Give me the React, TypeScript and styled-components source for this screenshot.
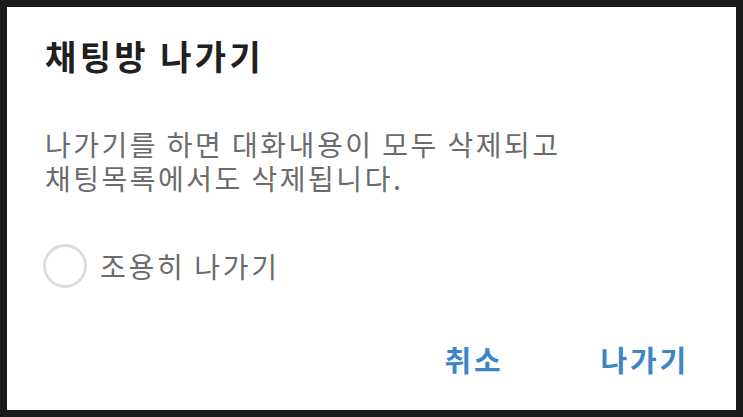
import React, { useState } from "react"
import styled, { createGlobalStyle } from "styled-components"

const GlobalStyle = createGlobalStyle`
  html, body {
    margin: 0;
    padding: 0;
    background: #1a1a1a;
  }
  body {
    font-family: "Noto Sans CJK KR", "Noto Sans", sans-serif;
  }
`

const Screen = styled.div`
  width: 743px;
  height: 417px;
  padding: 7px;
  box-sizing: border-box;
  background: #1a1a1a;
`

const Dialog = styled.div`
  width: 100%;
  height: 100%;
  background: #ffffff;
  box-sizing: border-box;
  padding: 29px 45px 0 38px;
  display: flex;
  flex-direction: column;
`

const Title = styled.h2`
  margin: 0;
  font-size: 34px;
  line-height: 40px;
  font-weight: 700;
  letter-spacing: 3.4px;
  color: #202020;
`

const Message = styled.p`
  margin: 51px 0 0;
  font-size: 28px;
  line-height: 34px;
  letter-spacing: 2.5px;
  color: #6b6b6b;
`

const OptionRow = styled.label`
  margin-top: 49px;
  margin-left: -2px;
  display: flex;
  align-items: center;
  gap: 13px;
  cursor: pointer;
`

const RadioCircle = styled.span<{ $checked: boolean }>`
  width: 44px;
  height: 44px;
  box-sizing: border-box;
  border-radius: 50%;
  border: 3px solid ${(p) => (p.$checked ? "#3a86c8" : "#dcdcdc")};
  display: flex;
  align-items: center;
  justify-content: center;

  &::after {
    content: "";
    width: 22px;
    height: 22px;
    border-radius: 50%;
    background: ${(p) => (p.$checked ? "#3a86c8" : "transparent")};
  }
`

const OptionLabel = styled.span`
  font-size: 28px;
  line-height: 44px;
  letter-spacing: 2.7px;
  color: #6b6b6b;
`

const Actions = styled.div`
  margin: 47px 2px 0 0;
  display: flex;
  justify-content: flex-end;
  gap: 97px;
`

const ActionButton = styled.button`
  border: none;
  background: none;
  padding: 0;
  height: 48px;
  font-family: inherit;
  font-size: 29px;
  font-weight: 700;
  letter-spacing: 2.8px;
  color: #3a86c8;
  cursor: pointer;
`

const App = () => {
  const [quiet, setQuiet] = useState(false)
  return (
    <>
      <GlobalStyle />
      <Screen>
        <Dialog>
          <Title>채팅방 나가기</Title>
          <Message>
            나가기를 하면 대화내용이 모두 삭제되고
            <br />
            채팅목록에서도 삭제됩니다.
          </Message>
          <OptionRow onClick={() => setQuiet(!quiet)}>
            <RadioCircle $checked={quiet} />
            <OptionLabel>조용히 나가기</OptionLabel>
          </OptionRow>
          <Actions>
            <ActionButton>취소</ActionButton>
            <ActionButton>나가기</ActionButton>
          </Actions>
        </Dialog>
      </Screen>
    </>
  )
}

export default App
